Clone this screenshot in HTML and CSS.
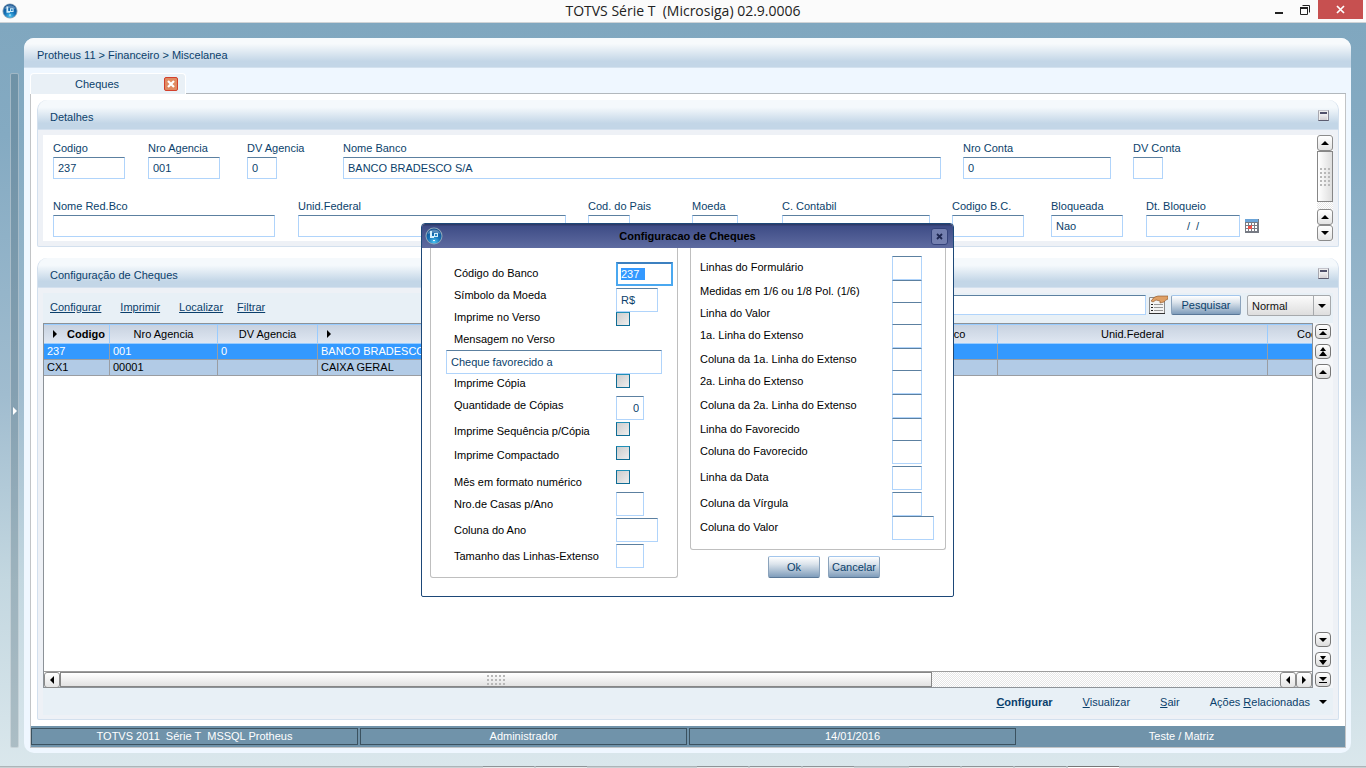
FILE: index.html
```html
<!DOCTYPE html>
<html lang="pt-BR">
<head>
<meta charset="utf-8">
<title>TOTVS Série T (Microsiga) 02.9.0006</title>
<link rel="stylesheet" href="styles.css">
</head>
<body>
<svg class="defs" aria-hidden="true">
  <defs>
    <radialGradient id="orb" cx="50%" cy="90%" r="90%">
      <stop offset="0" stop-color="#4cc4f2"/><stop offset=".45" stop-color="#1673b8"/><stop offset="1" stop-color="#0d4a8c"/>
    </radialGradient>
    <symbol id="logo" viewBox="0 0 18 18">
      <circle cx="9" cy="9" r="8.500" fill="#8ea6b8"/><circle cx="9" cy="9" r="7.500" fill="url(#orb)"/>
      <path d="M2.500 7a7 7 0 0 1 13 0q-6-3-13 0z" fill="#fff" opacity=".3"/>
      <path d="M5 4h2v5h2v2H5zM9 6h4v4H9z" fill="#d4eefb"/><path d="M10 7h2v2h-2z" fill="#2a86c4"/><path d="M8 13h2v1H8z" fill="#e8f7ff"/>
    </symbol>
    <symbol id="up" viewBox="0 0 8 8"><path d="M4 2l4 4H0z"/></symbol>
    <symbol id="down" viewBox="0 0 8 8"><path d="M0 2h8L4 6z"/></symbol>
    <symbol id="left" viewBox="0 0 8 8"><path d="M6 0v8L2 4z"/></symbol>
    <symbol id="right" viewBox="0 0 8 8"><path d="M2 0l4 4-4 4z"/></symbol>
    <symbol id="top" viewBox="0 0 8 8"><path d="M0 1h8v1H0zM4 3l4 4H0z"/></symbol>
    <symbol id="bottom" viewBox="0 0 8 8"><path d="M0 1h8L4 5zM0 6h8v1H0z"/></symbol>
    <symbol id="pgup" viewBox="0 0 8 10"><path d="M4 0l3 4H1zM4 4l4 5H0z"/></symbol>
    <symbol id="pgdown" viewBox="0 0 8 10"><path d="M1 1h6L4 5zM0 5h8l-4 5z"/></symbol>
  </defs>
</svg>
<div class="app">
  <header class="titlebar">
    <svg class="titlebar-logo"><use href="#logo"/></svg>
    <h1 class="titlebar-text">TOTVS Série T&nbsp; (Microsiga) 02.9.0006</h1>
    <div class="window-buttons">
      <button class="win-btn" aria-label="Minimizar"><svg width="12" height="18" viewBox="0 0 12 18"><path d="M2 11h8v2H2z" fill="#222"/></svg></button>
      <button class="win-btn" aria-label="Restaurar"><svg width="12" height="18" viewBox="0 0 12 18"><path d="M3.500 4.500h7v7" fill="none" stroke="#222"/><path d="M1.500 7h7v6.500h-7z" fill="none" stroke="#222"/><path d="M1 6h8v2H1z" fill="#222"/></svg></button>
      <button class="win-btn win-close" aria-label="Fechar"><svg width="9" height="9" viewBox="0 0 9 9"><path d="M1 1l7 7M8 1L1 8" stroke="#fff" stroke-width="1.700"/></svg></button>
    </div>
  </header>

  <div class="desktop">
    <aside class="side"><button class="side-handle" aria-label="Abrir menu"><svg width="6" height="8" viewBox="0 0 6 8"><path d="M1 0l4 4-4 4z" fill="#fff"/></svg></button></aside>
    <main class="window">
      <nav class="crumbs">Protheus 11 &gt; Financeiro &gt; Miscelanea</nav>
      <div class="tabs">
        <div class="tab"><span class="tab-name">Cheques</span>
          <button class="tab-close" aria-label="Fechar aba"><svg width="8" height="8" viewBox="0 0 8 8"><path d="M1 1l6 6M7 1L1 7" stroke="#fff" stroke-width="2.200"/></svg></button>
        </div>
        <div class="tab-rest"></div>
      </div>

      <div class="content">
        <div class="panels">
          <section class="panel">
            <div class="panel-head"><h2>Detalhes</h2><button class="collapse" aria-label="Recolher detalhes"></button></div>
            <div class="panel-body">
              <div class="details">
                <form class="fields">
                  <div class="field-row row-one">
                    <div class="field"><label for="codigo">Codigo</label><input id="codigo" class="w72" value="237"></div>
                    <div class="field"><label for="agencia">Nro Agencia</label><input id="agencia" class="w72" value="001"></div>
                    <div class="field"><label for="dvag">DV Agencia</label><input id="dvag" class="w30" value="0"></div>
                    <div class="field"><label for="banco">Nome Banco</label><input id="banco" class="fill" value="BANCO BRADESCO S/A"></div>
                    <div class="field"><label for="conta">Nro Conta</label><input id="conta" class="w148" value="0"></div>
                    <div class="field"><label for="dvconta">DV Conta</label><input id="dvconta" class="w30"></div>
                  </div>
                  <div class="field-row row-two">
                    <div class="field"><label for="red">Nome Red.Bco</label><input id="red" class="w222"></div>
                    <div class="field"><label for="uf">Unid.Federal</label><input id="uf" class="fill"></div>
                    <div class="field"><label for="pais">Cod. do Pais</label><input id="pais" class="w42"></div>
                    <div class="field"><label for="moeda">Moeda</label><input id="moeda" class="w46"></div>
                    <div class="field"><label for="contabil">C. Contabil</label><input id="contabil" class="w148"></div>
                    <div class="field"><label for="bc">Codigo B.C.</label><input id="bc" class="w72"></div>
                    <div class="field"><label for="bloq">Bloqueada</label><input id="bloq" class="w72" value="Nao"></div>
                    <div class="field"><label for="dtbloq">Dt. Bloqueio</label>
                      <div class="date"><input id="dtbloq" class="w94 center" value="/&nbsp; /">
                        <button type="button" class="plain" aria-label="Calendário"><svg width="14" height="14" viewBox="0 0 14 14"><path d="M0 0h14v14H0z" fill="#777b84"/><path d="M0 0h13v3H0z" fill="#6ba4d8"/><path d="M1 4h2v2H1zm3 0h2v2H4zm3 0h2v2H7zm3 0h2v2h-2zM1 7h2v2H1zm3 0h2v2H4zm3 0h2v2H7zm3 0h2v2h-2zM1 10h2v2H1zm3 0h2v2H4zm3 0h2v2H7zm3 0h2v2h-2z" fill="#fff"/><path d="M3 7h1v3H3zM4 9h3v1H4zM6 6h1v3H6zM4 7h2v2H4z" fill="#f05048"/></svg></button>
                      </div>
                    </div>
                  </div>
                </form>
                <div class="vscroll">
                  <button class="sb" aria-label="Subir"><svg width="8" height="8"><use href="#up"/></svg></button>
                  <div class="vthumb"><i class="grip"></i></div>
                  <div class="track"></div>
                  <button class="sb" aria-label="Linha acima"><svg width="8" height="8"><use href="#up"/></svg></button>
                  <button class="sb" aria-label="Linha abaixo"><svg width="8" height="8"><use href="#down"/></svg></button>
                </div>
              </div>
            </div>
          </section>

          <section class="panel panel-grow">
            <div class="panel-head"><h2>Configuração de Cheques</h2><button class="collapse" aria-label="Recolher configuração"></button></div>
            <div class="panel-body">
              <div class="browser">
                <div class="toolbar">
                  <a href="#configurar">Configurar</a><a href="#imprimir">Imprimir</a><a href="#localizar">Localizar</a><a href="#filtrar">Filtrar</a>
                  <input class="search" aria-label="Pesquisar cheque">
                  <button class="plain" aria-label="Opções de pesquisa"><svg width="20" height="20" viewBox="0 0 20 20"><path d="M1.500 2.500h15v16h-15z" fill="#f4f4f4" stroke="#888"/><path d="M1 18h16v1H1z" fill="#333"/><path d="M3 9h2v1H3zm0 3h2v1H3zm0 3h2v1H3z" fill="#222"/><path d="M6 9h9v1H6zm0 3h9v1H6zm0 3h9v1H6z" fill="#999"/><path d="M3 6q3-5 7-5l10 0v3q-3 1-4 3l-4 1 0-2-4-1-3 2z" fill="#dfa066" stroke="#8a5226" stroke-width=".6"/></svg></button>
                  <button class="btn btn-search">Pesquisar</button>
                  <div class="combo"><select aria-label="Modo de pesquisa"><option>Normal</option></select><svg width="8" height="8"><use href="#down"/></svg></div>
                </div>
                <div class="grid-area">
                  <div class="grid-box">
                    <div class="grid-view">
                      <table class="grid">
                        <colgroup><col class="c1"><col class="c2"><col class="c3"><col class="c4"><col class="c5"><col class="c6"><col class="c7"></colgroup>
                        <thead><tr>
                          <th class="sorted"><span><svg width="8" height="8"><use href="#right"/></svg>Codigo</span></th>
                          <th>Nro Agencia</th><th>DV Agencia</th>
                          <th><span><svg width="8" height="8"><use href="#right"/></svg><em>Nome Banco</em></span></th>
                          <th>Nome Red.Bco</th><th>Unid.Federal</th><th>Cod. do Pais</th>
                        </tr></thead>
                        <tbody>
                          <tr class="selected"><td>237</td><td>001</td><td>0</td><td>BANCO BRADESCO S/A</td><td></td><td></td><td></td></tr>
                          <tr><td>CX1</td><td>00001</td><td></td><td>CAIXA GERAL</td><td></td><td></td><td></td></tr>
                        </tbody>
                      </table>
                    </div>
                    <div class="hscroll">
                      <button class="sb" aria-label="Esquerda"><svg width="8" height="8"><use href="#left"/></svg></button>
                      <div class="hthumb"><i class="grip"></i></div>
                      <div class="track"></div>
                      <button class="sb" aria-label="Coluna anterior"><svg width="8" height="8"><use href="#left"/></svg></button>
                      <button class="sb" aria-label="Próxima coluna"><svg width="8" height="8"><use href="#right"/></svg></button>
                    </div>
                  </div>
                  <div class="pager">
                    <button class="nav" aria-label="Primeiro"><svg width="8" height="8"><use href="#top"/></svg></button>
                    <button class="nav" aria-label="Página anterior"><svg width="8" height="10"><use href="#pgup"/></svg></button>
                    <button class="nav" aria-label="Anterior"><svg width="8" height="8"><use href="#up"/></svg></button>
                    <span class="spacer"></span>
                    <button class="nav" aria-label="Próximo"><svg width="8" height="8"><use href="#down"/></svg></button>
                    <button class="nav" aria-label="Próxima página"><svg width="8" height="10"><use href="#pgdown"/></svg></button>
                    <button class="nav" aria-label="Último"><svg width="8" height="8"><use href="#bottom"/></svg></button>
                  </div>
                </div>
                <div class="actions">
                  <a class="strong" href="#configurar"><u>C</u>onfigurar</a><a href="#visualizar"><u>V</u>isualizar</a><a href="#sair"><u>S</u>air</a>
                  <a class="more" href="#acoes"><span>Ações <u>R</u>elacionadas</span><svg width="8" height="8"><use href="#down"/></svg></a>
                </div>
              </div>
            </div>
          </section>
        </div>
        <footer class="status"><span>TOTVS 2011&nbsp; Série T&nbsp; MSSQL Protheus</span><span>Administrador</span><span>14/01/2016</span><span class="last">Teste / Matriz</span></footer>
      </div>
    </main>
  </div>
  <div class="taskbar"><i class="task first"></i><i class="task"></i><i class="task later"></i><i class="task"></i><i class="task"></i><i class="task later"></i><i class="task"></i><i class="task"></i><i class="task lit"></i></div>
</div>

<div class="dialog" role="dialog" aria-labelledby="dlg-title">
  <div class="dialog-head"><svg class="dialog-logo"><use href="#logo"/></svg><h2 id="dlg-title">Configuracao de Cheques</h2><button class="dialog-close" aria-label="Fechar"><svg width="7" height="7" viewBox="0 0 7 7"><path d="M1 1l5 5M6 1L1 6" stroke="#1d2650" stroke-width="1.800"/></svg></button></div>
  <form class="dialog-body">
    <div class="group group-left">
      <div class="stacks">
        <div class="labels"><label for="d-banco">Código do Banco</label><label for="d-moeda">Símbolo da Moeda</label><label for="d-verso">Imprime no Verso</label><label for="d-msg">Mensagem no Verso</label></div>
        <div class="controls"><div><input id="d-banco" class="tall active" value="237 &nbsp;"></div><div><input id="d-moeda" class="tall w42" value="R$"></div><input type="checkbox" id="d-verso"></div>
      </div>
      <input id="d-msg" class="tall message" value="Cheque favorecido a">
      <div class="line h22"><label for="d-copia">Imprime Cópia</label><input type="checkbox" id="d-copia"></div>
      <div class="line h26"><label for="d-qtd">Quantidade de Cópias</label><input id="d-qtd" class="tall w28 right" value="0"></div>
      <div class="line h24"><label for="d-seq">Imprime Sequência p/Cópia</label><input type="checkbox" id="d-seq"></div>
      <div class="line h24"><label for="d-comp">Imprime Compactado</label><input type="checkbox" id="d-comp"></div>
      <div class="line h22 low"><label for="d-mes">Mês em formato numérico</label><input type="checkbox" id="d-mes"></div>
      <div class="line h26 low"><label for="d-casas">Nro.de Casas p/Ano</label><input id="d-casas" class="tall w28"></div>
      <div class="line h26 low"><label for="d-ano">Coluna do Ano</label><input id="d-ano" class="tall w42"></div>
      <div class="line h24 low"><label for="d-tam">Tamanho das Linhas-Extenso</label><input id="d-tam" class="tall w28"></div>
    </div>
    <div class="right-side">
      <div class="group group-right">
        <div class="line h24"><label for="r1">Linhas do Formulário</label><input id="r1" class="tall w30"></div>
        <div class="line h22"><label for="r2">Medidas em 1/6 ou 1/8 Pol. (1/6)</label><input id="r2" class="tall w30"></div>
        <div class="line h22"><label for="r3">Linha do Valor</label><input id="r3" class="tall w30"></div>
        <div class="line h24"><label for="r4">1a. Linha do Extenso</label><input id="r4" class="tall w30"></div>
        <div class="line h22"><label for="r5">Coluna da 1a. Linha do Extenso</label><input id="r5" class="tall w30"></div>
        <div class="line h24"><label for="r6">2a. Linha do Extenso</label><input id="r6" class="tall w30"></div>
        <div class="line h24"><label for="r7">Coluna da 2a. Linha do Extenso</label><input id="r7" class="tall w30"></div>
        <div class="line h22"><label for="r8">Linha do Favorecido</label><input id="r8" class="tall w30"></div>
        <div class="line h26"><label for="r9">Coluna do Favorecido</label><input id="r9" class="tall w30"></div>
        <div class="line h26"><label for="r10">Linha da Data</label><input id="r10" class="tall w30"></div>
        <div class="line h24"><label for="r11">Coluna da Vírgula</label><input id="r11" class="tall w30"></div>
        <div class="line h24"><label for="r12">Coluna do Valor</label><input id="r12" class="tall w42"></div>
      </div>
      <div class="dialog-buttons"><button type="button" class="btn">Ok</button><button type="button" class="btn">Cancelar</button></div>
    </div>
  </form>
</div>
<script src="main.js"></script>
</body>
</html>
```
FILE: styles.css
```css
* { box-sizing: border-box; }
body { margin: 0; font: 11px/14px "Liberation Sans", Arial, sans-serif; color: #0b3f6b; }
h1, h2 { margin: 0; font-size: 11px; font-weight: normal; }
button, input, select { font: inherit; color: inherit; margin: 0; }
button { padding: 0; border: 0; background: none; display: flex; align-items: center; justify-content: center; }
button svg { display: block; }
a { color: inherit; }
.defs { position: absolute; width: 0; height: 0; }

.app { min-height: 100vh; display: flex; flex-direction: column; }

/* Title bar */
.titlebar { height: 23px; display: grid; grid-template-columns: 1fr auto 1fr; align-items: start; background: #fbfbfb; border-bottom: 1px solid #cfd3d6; }
.titlebar-logo { width: 16px; height: 16px; margin: 3px 2px; }
.titlebar-text { font: 14px/22px "Open Sans", "Noto Sans", sans-serif; color: #222; }
.window-buttons { display: flex; justify-content: flex-end; padding-right: 3px; }
.win-btn { width: 26px; height: 19px; }
.win-close { width: 45px; background: #c75050; }

/* Desktop and main window */
.desktop { flex: 1; display: flex; padding: 15px 15px 13px 0; background: linear-gradient(#80a7bf, #84aac2 15%, #a0bccf 50%, #c3d7e0 75%, #dae7ec); }
.side { flex: 0 0 24px; display: flex; padding: 35px 5px 5px 10px; }
.side-handle { width: 9px; border: 1px solid rgba(255, 255, 255, .35); border-radius: 2px; background: rgba(70, 95, 110, .3); }
.window { flex: 1; min-width: 0; display: flex; flex-direction: column; background: #eff7ff; border-radius: 10px; padding-bottom: 5px; }
.crumbs { height: 30px; padding: 10px 13px 0; border-radius: 10px 10px 0 0; border-bottom: 1px solid #d3e1ee; background: linear-gradient(#f7fafc 20%, #c3d6e7 80%); }
.tabs { display: flex; padding: 5px 5px 0 6px; height: 26px; }
.tab { width: 156px; display: flex; align-items: center; padding-right: 7px; background: #e9f0f6; border: 1px solid #fff; border-bottom: 0; border-radius: 4px 4px 0 0; }
.tab-name { flex: 1; padding-left: 44px; }
.tab-close { width: 14px; height: 14px; border: 1px solid #d2402c; border-radius: 2px; background: #e08a62; }
.tab-rest { flex: 1; border-bottom: 1px solid #b2b8bd; }
.content { flex: 1; margin: 0 5px 0 6px; display: flex; flex-direction: column; background: #fff; border: solid #c2c4c6; border-width: 0 1px 1px; }
.panels { flex: 1; display: flex; flex-direction: column; gap: 11px; padding: 6px; }

/* Panels */
.panel { background: #eef1f6; border: 1px solid #d3e0ee; border-top: 0; border-radius: 10px 10px 2px 2px; }
.panel-grow { flex: 1; display: flex; flex-direction: column; }
.panel-head { height: 30px; display: flex; justify-content: space-between; align-items: flex-start; padding: 10px 9px 0 12px; border-radius: 10px 10px 0 0; border-bottom: 1px solid #d3e0ee; background: linear-gradient(#f5f9fc 25%, #c3d6e7 80%); }
.collapse { width: 11px; height: 11px; border: 1px solid; border-color: #c4c4cc #8a8a98 #5c5c70 #a8a8b0; background: linear-gradient(#50506a 2px, #f2f2f4 2px, #d4d0d4) 1px 1px / 7px 8px no-repeat #eee; }
.panel-body { flex: 1; display: flex; flex-direction: column; padding: 5px; }
.panel-grow .panel-body { padding-bottom: 4px; }
.details { display: flex; background: #fff; }
.fields { flex: 1; min-width: 0; padding: 6px 0 4px 10px; display: flex; flex-direction: column; gap: 20px; }
.field-row { display: grid; }
.row-one { grid-template-columns: 95px 99px 96px 1fr 170px 184px; }
.row-two { grid-template-columns: 245px 1fr 104px 90px 170px 99px 95px 171px; }
.field { display: flex; flex-direction: column; align-items: flex-start; gap: 2px; white-space: nowrap; }
input { height: 22px; padding: 0 4px; border: 1px solid #b0d4fb; border-top-color: #5c80a0; background: #fff; border-radius: 0; outline: 0; }
.fill { width: calc(100% - 22px); }
.w28 { width: 28px; }
.w30 { width: 30px; }
.w42 { width: 42px; }
.w46 { width: 46px; }
.w72 { width: 72px; }
.w94 { width: 94px; }
.w148 { width: 148px; }
.w222 { width: 222px; }
.center { text-align: center; }
.right { text-align: right; }
.date { display: flex; align-items: center; gap: 5px; }

/* Scroll bars */
.vscroll { width: 16px; display: flex; flex-direction: column; }
.sb { flex: none; width: 16px; height: 16px; border: 1px solid #8b8b8b; border-radius: 3px; background: linear-gradient(#fff, #e4e4e4); }
.track { flex: 1; background: repeating-conic-gradient(#e6e6e6 0 25%, #fff 0 50%) 0 0 / 2px 2px; }
.vthumb, .hthumb { border: 1px solid #868686; display: flex; align-items: center; justify-content: center; }
.vthumb { height: 51px; background: linear-gradient(90deg, #fff, #dedede); }
.hthumb { flex: 0 0 872px; background: linear-gradient(#fff, #e2e2e2); }
.grip { background: radial-gradient(circle, #b8b8b8 1px, transparent 1px) 0 0 / 4px 4px; }
.vthumb .grip { width: 12px; height: 20px; }
.hthumb .grip { width: 20px; height: 12px; }
.hscroll { display: flex; height: 16px; border-top: 1px solid #9c9c9c; }

/* Browse area */
.browser { flex: 1; display: flex; flex-direction: column; background: #e8f0f6; }
.toolbar { height: 30px; display: flex; align-items: flex-start; padding: 2px 2px 0 7px; }
.toolbar a { margin: 5px 19px 0 0; }
.toolbar a + a + a { margin-right: 14px; }
.search { flex: 1; min-width: 0; height: 20px; margin: 0 2px 0 180px; }
.btn { height: 22px; min-width: 52px; border: 1px solid #8ba3bc; border-top-color: #a3c6ec; border-bottom-color: #5a7898; border-radius: 2px; background: linear-gradient(#fff, #dce4ec 35%, #7f9dbb); }
.btn-search { width: 70px; height: 20px; margin: 0 6px 0 3px; }
.combo { display: flex; align-items: center; width: 84px; height: 21px; border: 1px solid #a6a9ac; border-radius: 2px; background: linear-gradient(#fbfbfb, #dedede); color: #111; }
.combo select { flex: 1; width: 67px; height: 19px; appearance: none; border: 0; border-right: 1px solid #a6a9ac; background: none; padding: 0 4px; }
.combo svg { margin: 0 4px; }
.grid-area { flex: 1; display: flex; }
.grid-box { flex: 1; min-width: 0; display: flex; flex-direction: column; border: 1px solid #8c9298; background: #fff; color: #000; }
.grid-view { flex: 1; overflow: hidden; }
.grid { table-layout: fixed; border-collapse: separate; border-spacing: 0; width: 1346px; }
.c1 { width: 66px; }
.c2 { width: 108px; }
.c3 { width: 100px; }
.c4 { width: 541px; }
.c5 { width: 139px; }
.c6 { width: 270px; }
.c7 { width: 122px; }
.grid th { height: 20px; padding: 0; font-weight: normal; background: linear-gradient(#c8d2e0, #dfe7f2); border: 1px solid #99ccff; border-left-width: 0; }
.grid th.sorted { font-weight: bold; }
.grid th span { display: flex; align-items: center; padding: 0 4px 0 7px; justify-content: space-between; }
.grid th em { flex: 1; font-style: normal; }
.grid td { height: 16px; padding: 0 3px; line-height: 14px; vertical-align: top; white-space: nowrap; background: #b2cbe6; border: solid #9a9da2; border-width: 0 1px 1px 0; }
.grid .selected td { background: #3399ff; color: #fff; }
.pager { width: 20px; padding: 1px 2px; display: flex; flex-direction: column; gap: 5px; background: #f4f6f9; }
.nav { height: 15px; border: 1px solid #777; border-radius: 4px; background: linear-gradient(#fff, #ddd); }
.spacer { flex: 1; }
.actions { height: 27px; display: flex; justify-content: flex-end; align-items: center; gap: 30px; padding-right: 6px; }
.actions a { text-decoration: none; }
.strong { font-weight: bold; }
.more { display: flex; align-items: center; gap: 9px; color: #0b3f6b; }

/* Status line */
.status { height: 21px; display: grid; grid-template-columns: repeat(4, 1fr); gap: 2px; padding: 2px 0; background: #7093aa; color: #fff; }
.status span { border: 1px solid #3b5260; text-align: center; line-height: 15px; }
.status .last { border-color: transparent; }
.taskbar { height: 2px; display: flex; gap: 2px; background: linear-gradient(#adb5b8 1px, #c9d0d3 1px); }
.task { width: 51px; background: linear-gradient(#8e9497 1px, #e6e9ea 1px); }
.first { margin-left: 483px; }
.later { margin-left: 108px; }
.later ~ .later { margin-left: 53px; }
.lit { background: linear-gradient(#777 1px, #fff 1px); }

/* Dialog */
.dialog { position: absolute; left: 421px; top: 223px; width: 533px; background: #fff; border: 1px solid #1d4878; border-radius: 4px 4px 2px 2px; color: #000; }
.dialog-head { height: 24px; display: grid; grid-template-columns: 28px 1fr 28px; align-items: center; border-radius: 3px 3px 0 0; background: linear-gradient(#2e3a68 1px, #3e4c86 2px, #5e6ba0); }
.dialog-logo { width: 18px; height: 18px; margin-left: 3px; }
.dialog-head h2 { text-align: center; font-weight: bold; }
.dialog-close { width: 17px; height: 17px; margin-left: 6px; border: 1px solid #34427a; border-radius: 3px; background: #7480b0; }
.dialog-body { display: flex; gap: 12px; padding: 0 7px 18px 8px; }
.group { border: 1px solid #bfbfbf; border-top: 0; border-radius: 0 0 3px 3px; }
.group-left { width: 248px; padding: 14px 15px 8px; }
.stacks { display: flex; height: 88px; }
.labels { flex: none; width: 170px; padding-left: 8px; }
.labels label { display: block; line-height: 22px; }
.controls { display: flex; flex-direction: column; }
.controls div { height: 26px; display: flex; }
.controls div + div { height: 24px; }
.tall { height: 24px; color: #0b3f6b; }
.active { width: 57px; border: 2px solid #4aa8f0; border-top-color: #3c80c0; padding: 0 3px; }
.active::selection { background: #3399ff; color: #fff; }
.message { display: block; width: 216px; }
.line { display: flex; align-items: flex-start; }
.line label { width: 170px; padding-left: 8px; line-height: 18px; white-space: nowrap; }
.line.low label { line-height: 24px; }
.h22 { height: 22px; }
.h24 { height: 24px; }
.h26 { height: 26px; }
input[type="checkbox"] { appearance: none; width: 14px; height: 14px; padding: 0; border: 1px solid #0f6c94; border-top-color: #2090b8; background: linear-gradient(135deg, #ccc, #eee); }
.right-side { flex: 1; }
.group-right { padding: 8px 10px 9px 9px; }
.group-right .line label { width: 192px; padding: 0; line-height: 22px; }
.dialog-buttons { display: flex; gap: 8px; padding: 6px 0 0 78px; }
.dialog-buttons .btn { color: #0b3f6b; }
```
FILE: main.js
```js
const bank = document.getElementById("d-banco");
bank.focus();
bank.select();
```
